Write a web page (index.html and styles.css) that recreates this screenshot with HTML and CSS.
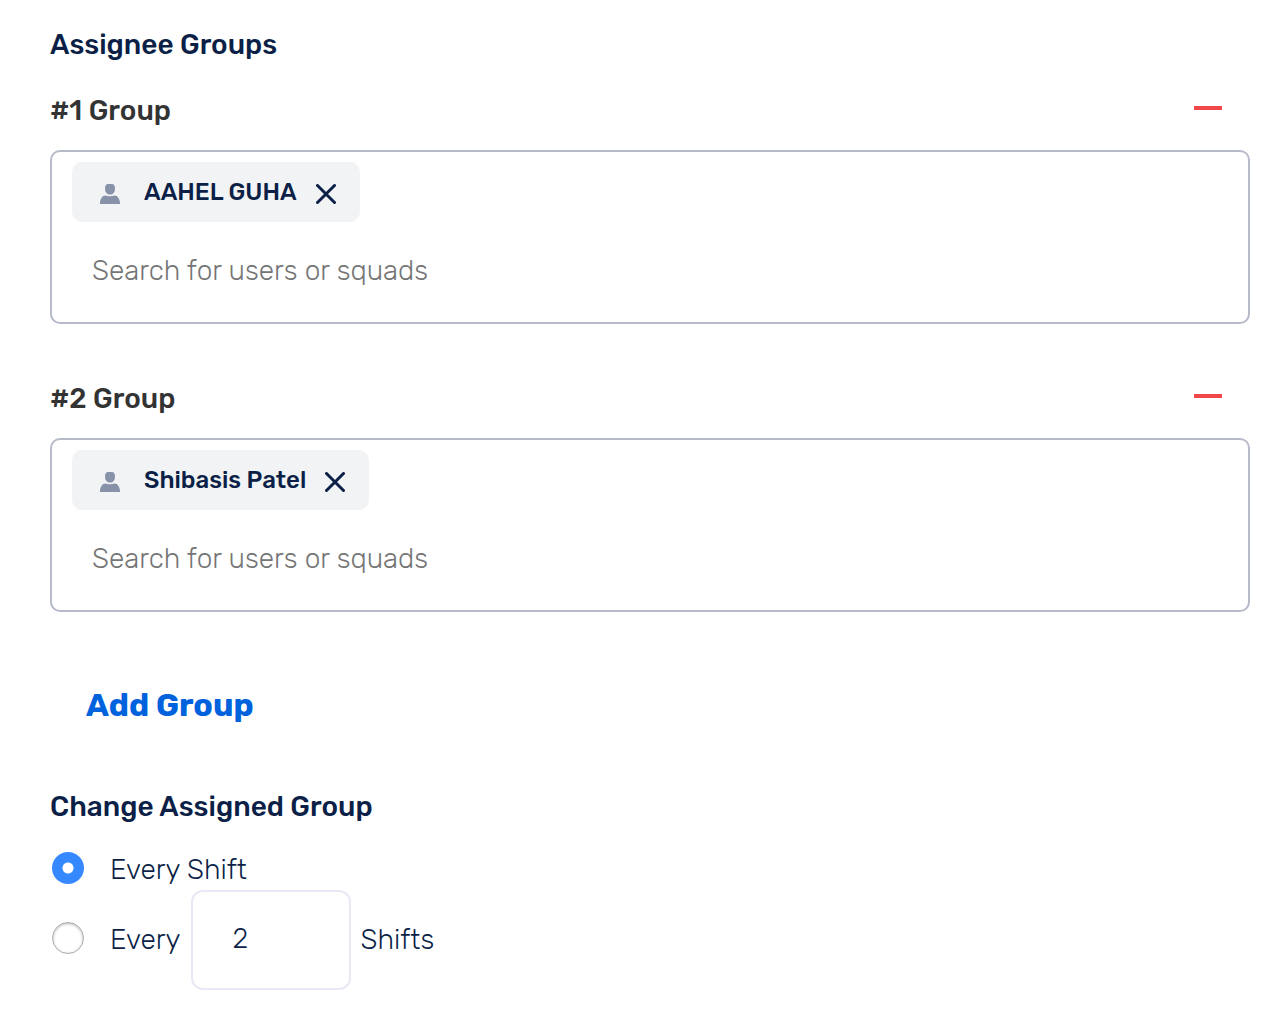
FILE: index.html
```html
<!DOCTYPE html>
<html lang="en">
<head>
    <meta charset="UTF-8">
    <meta name="viewport" content="width=device-width, initial-scale=1.0">
    <title>Assignee Groups</title>
    <link rel="stylesheet" href="styles.css">
</head>
<body>

<form class="container">
    <h2>Assignee Groups</h2>

    <!-- Group 1 -->
    <section class="group">
        <div class="group-header">
            <label for="search-1">#1 Group</label>
            <button type="button" class="remove-group" aria-label="Remove group 1"></button>
        </div>
        <div class="group-box">
            <div class="chip">
                <svg class="user-icon" viewBox="0 0 20 20" aria-hidden="true">
                    <path d="M8.2 0H11.8C13.8 0 14.9 1.6 14.9 3.6V5.5C14.9 8.3 13 10.6 10 10.6S5.1 8.3 5.1 5.5V3.6C5.1 1.6 6.2 0 8.2 0Z"/>
                    <path d="M0 20V18.5C.4 15 2.2 11.4 5.5 11.4C6.8 11.9 8.2 12.2 10 12.2S13.2 11.9 14.5 11.4C17.8 11.4 19.6 15 20 18.5V20Z"/>
                </svg>
                <span class="chip-name">AAHEL GUHA</span>
                <button type="button" class="remove-user" aria-label="Remove AAHEL GUHA">
                    <svg viewBox="0 0 20 20" aria-hidden="true"><path d="M1.5 1.5L18.5 18.5M18.5 1.5L1.5 18.5"/></svg>
                </button>
            </div>
            <input type="text" id="search-1" class="search" placeholder="Search for users or squads">
        </div>
    </section>

    <!-- Group 2 -->
    <section class="group">
        <div class="group-header">
            <label for="search-2">#2 Group</label>
            <button type="button" class="remove-group" aria-label="Remove group 2"></button>
        </div>
        <div class="group-box">
            <div class="chip">
                <svg class="user-icon" viewBox="0 0 20 20" aria-hidden="true">
                    <path d="M8.2 0H11.8C13.8 0 14.9 1.6 14.9 3.6V5.5C14.9 8.3 13 10.6 10 10.6S5.1 8.3 5.1 5.5V3.6C5.1 1.6 6.2 0 8.2 0Z"/>
                    <path d="M0 20V18.5C.4 15 2.2 11.4 5.5 11.4C6.8 11.9 8.2 12.2 10 12.2S13.2 11.9 14.5 11.4C17.8 11.4 19.6 15 20 18.5V20Z"/>
                </svg>
                <span class="chip-name">Shibasis Patel</span>
                <button type="button" class="remove-user" aria-label="Remove Shibasis Patel">
                    <svg viewBox="0 0 20 20" aria-hidden="true"><path d="M1.5 1.5L18.5 18.5M18.5 1.5L1.5 18.5"/></svg>
                </button>
            </div>
            <input type="text" id="search-2" class="search" placeholder="Search for users or squads">
        </div>
    </section>

    <button type="button" class="add-group">Add Group</button>

    <!-- Rotation options -->
    <h2 id="change-title">Change Assigned Group</h2>
    <div class="options" role="radiogroup" aria-labelledby="change-title">
        <div class="option">
            <input type="radio" name="rotation" id="every-shift" checked>
            <label for="every-shift">Every Shift</label>
        </div>
        <div class="option">
            <input type="radio" name="rotation" id="every-n">
            <label for="every-n">Every</label>
            <input type="text" class="shift-count" inputmode="numeric" value="2" aria-label="Number of shifts">
            <span>Shifts</span>
        </div>
    </div>
</form>

</body>
</html>
```

FILE: styles.css
```css
* {
    box-sizing: border-box;
}

body {
    margin: 0;
    font-family: Rubik, Roboto, "Liberation Sans", sans-serif;
    font-size: 28px;
    font-weight: 300;
    line-height: 36px;
    color: #0b1f47;
    background-color: #fff;
}

button,
input {
    font: inherit;
    color: inherit;
}

button {
    padding: 0;
    border: none;
    background: none;
    cursor: pointer;
}

.container {
    padding: 27px 38px 22px 50px;
}

h2 {
    margin: 0;
    font-size: 28px;
    font-weight: 500;
}

/* Groups */
.group {
    margin-top: 24px;
    margin-bottom: 51px;
}

.group-header {
    display: flex;
    justify-content: space-between;
    align-items: center;
    height: 48px;
    padding-right: 28px;
    margin-bottom: 15px;
    font-weight: 500;
    color: #333;
}

.remove-group {
    width: 28px;
    height: 4px;
    margin-bottom: 6px;
    background-color: #f24749;
}

.group-box {
    padding: 10px 20px 12px;
    border: 2px solid #b6bac9;
    border-radius: 10px;
}

.chip {
    display: flex;
    align-items: center;
    width: fit-content;
    height: 60px;
    padding: 0 24px 0 28px;
    border-radius: 10px;
    background-color: #f2f3f5;
    font-size: 24px;
    font-weight: 500;
}

.user-icon {
    width: 20px;
    height: 20px;
    margin-top: 4px;
    margin-right: 24px;
    fill: #8791a8;
}

.remove-user {
    width: 20px;
    height: 20px;
    margin-top: 4px;
    margin-left: 19px;
}

.remove-user svg {
    display: block;
    fill: none;
    stroke: #0b1f47;
    stroke-width: 3;
    stroke-linecap: round;
}

.search {
    display: block;
    width: 100%;
    height: 80px;
    margin-top: 8px;
    padding: 0 20px;
    border: none;
    outline: none;
    background: none;
}

.search::placeholder {
    color: #757575;
    opacity: 1;
}

.add-group {
    display: block;
    margin: 75px 0 66px 36px;
    font-size: 32px;
    font-weight: 700;
    color: #0062dd;
}

/* Radio options */
.options {
    display: flex;
    flex-direction: column;
    gap: 2px;
    margin-top: 27px;
}

.option {
    display: flex;
    align-items: center;
}

.option input[type="radio"] {
    appearance: none;
    width: 32px;
    height: 32px;
    margin: 0 26px 4px 2px;
    border: 1px solid #aaa;
    border-radius: 50%;
    background-color: #fff;
    box-shadow: inset 0 1px 3px #bbb;
}

.option input[type="radio"]:checked {
    border: none;
    background: radial-gradient(circle, #fff 5px, #3689fc 6px);
    box-shadow: none;
}

.shift-count {
    width: 160px;
    height: 100px;
    margin: 0 10px;
    padding: 0 40px 4px;
    border: 2px solid #e7eaf6;
    border-radius: 12px;
    background-color: #fff;
}
```
